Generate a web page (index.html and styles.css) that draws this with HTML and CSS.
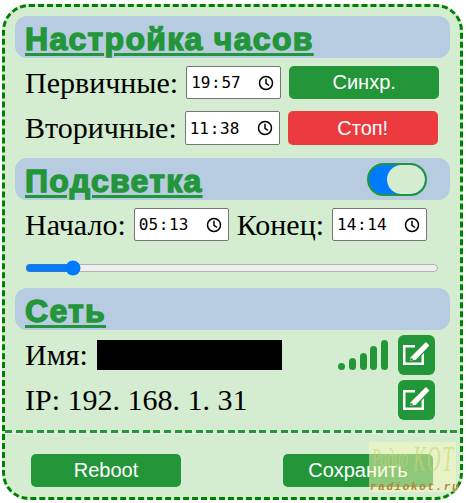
FILE: index.html
```html
<!DOCTYPE html>
<html lang="ru">
<head>
<meta charset="utf-8">
<title>Настройка часов</title>
<link rel="stylesheet" href="styles.css">
</head>
<body>
<svg class="defs" width="0" height="0">
  <defs>
    <g id="clock">
      <circle cx="8" cy="8" r="6.500"/>
      <path d="M8 3.800V8.300L11 10.500"/>
    </g>
    <g id="pen">
      <path class="edit-box" d="M14 6.250H3.250V23.750H21.750V13"/>
      <path class="edit-pen" d="M9 17L24 2Q25 1 26 2L28.300 4.500Q29.300 5.500 28.300 6.500L15.500 20L8.300 21.800Z"/>
      <circle class="edit-tip" cx="10.500" cy="19.500" r="1.300"/>
    </g>
  </defs>
</svg>
<main class="card">
  <div class="content">
    <section class="head"><h2>Настройка часов</h2></section>
    <div class="row">
      <label>Первичные:</label>
      <div class="time"><span>19</span><i>:</i><span>57</span><svg class="clock" width="16" height="16" viewBox="0 0 16 16"><use href="#clock"/></svg></div>
      <button class="btn">Синхр.</button>
    </div>
    <div class="row row-second">
      <label>Вторичные:</label>
      <div class="time"><span>11</span><i>:</i><span>38</span><svg class="clock" width="16" height="16" viewBox="0 0 16 16"><use href="#clock"/></svg></div>
      <button class="btn btn-red">Стоп!</button>
    </div>
    <section class="head head-light">
      <h2>Подсветка</h2>
      <div class="toggle"><span class="knob"></span></div>
    </section>
    <div class="row">
      <label>Начало:</label>
      <div class="time"><span>05</span><i>:</i><span>13</span><svg class="clock" width="16" height="16" viewBox="0 0 16 16"><use href="#clock"/></svg></div>
      <label>Конец:</label>
      <div class="time"><span>14</span><i>:</i><span>14</span><svg class="clock" width="16" height="16" viewBox="0 0 16 16"><use href="#clock"/></svg></div>
    </div>
    <input class="range" type="range" min="0" max="100" value="10">
    <section class="head"><h2>Сеть</h2></section>
    <div class="net-row">
      <span class="net-text">Имя:</span>
      <span class="redact"></span>
      <svg class="signal" width="50" height="30" viewBox="0 0 50 30">
        <rect x="0" y="23" width="7" height="7" rx="3.5"/>
        <rect x="11" y="18" width="7" height="12" rx="3.5"/>
        <rect x="22" y="13" width="7" height="17" rx="3.5"/>
        <rect x="32" y="6" width="7" height="24" rx="3.5"/>
        <rect x="43" y="0" width="7" height="30" rx="3.5"/>
      </svg>
      <span class="edit"><svg width="31" height="30" viewBox="0 0 31 30"><use href="#pen"/></svg></span>
    </div>
    <div class="net-row net-row-ip">
      <span class="net-text">IP: 192. 168. 1. 31</span>
      <span class="edit"><svg width="31" height="30" viewBox="0 0 31 30"><use href="#pen"/></svg></span>
    </div>
  </div>
  <div class="rule"></div>
  <footer class="foot">
    <button class="btn">Reboot</button>
    <button class="btn">Сохранить</button>
  </footer>
</main>
<div class="mark">
  <span class="mark-top"><span>Радио</span><span class="mark-kot">КОТ</span></span>
  <span class="mark-bot">radiokot.ru</span>
</div>
</body>
</html>
```
FILE: styles.css
```css
* { box-sizing: border-box; }
html, body { margin: 0; padding: 0; background: #fff; }
body { height: 503px; overflow: hidden; font-family: "Liberation Serif", serif; color: #000; }
.defs { position: absolute; }

.card {
  width: 461px;
  height: 496px;
  margin: 4px 0 0 2px;
  background: #d4edd1;
  border: 3px dashed #008000;
  border-radius: 27px;
  overflow: hidden;
}
.content { padding: 9px 10px 0 10px; }

.head {
  height: 42px;
  background: #b7cce0;
  border-radius: 12px;
  padding: 0 23px 0 10px;
  display: flex;
  align-items: center;
  justify-content: space-between;
}
h2 {
  margin: 3px 0 0;
  font: bold 32px/42px "Liberation Sans", sans-serif;
  color: #239639;
  text-decoration: underline;
  text-decoration-thickness: 3px;
  text-underline-offset: 3px;
  -webkit-text-stroke: 1.4px #239639;
  letter-spacing: 1.3px;
}

.row {
  display: flex;
  align-items: center;
  gap: 8px;
  height: 33px;
  margin: 8px 0 0 10px;
  font-size: 30px;
}
.row-second { margin-top: 12px; margin-bottom: 13px; height: 34px; }
label { white-space: nowrap; }

.time {
  flex: none;
  width: 95px;
  height: 33px;
  padding: 0 6px 0 4px;
  background: #fff;
  border: 1px solid #767676;
  border-radius: 2px;
  display: flex;
  align-items: center;
  font: 16px "DejaVu Sans Mono", monospace;
  color: #000;
}
.time i { font-style: normal; width: 11px; text-align: center; }
.clock { margin-left: auto; fill: none; stroke: #000; stroke-width: 1.5; }
.row-second .time { height: 34px; }

.btn {
  flex: none;
  width: 150px;
  height: 33px;
  border: 0;
  border-radius: 5px;
  background: #239639;
  color: #fff;
  font: 20px "Liberation Sans", sans-serif;
  padding: 0;
}
.row-second .btn { height: 34px; }
.btn-red { background: #eb3b3f; }

.toggle {
  width: 60px;
  height: 33px;
  border: 2px solid #239639;
  border-radius: 17px;
  background: #007bff;
  display: flex;
  justify-content: flex-end;
  overflow: hidden;
}
.knob { width: 38px; height: 29px; border-radius: 15px; background: #d4edd1; }

.range {
  display: block;
  width: 414px;
  height: 16px;
  margin: 19px 0 12px 10px;
  accent-color: #007bff;
}

.net-row {
  display: flex;
  align-items: center;
  height: 40px;
  margin: 5px 0 0 10px;
  padding-right: 15px;
  font-size: 30px;
}
.net-row-ip { justify-content: space-between; }
.net-text { white-space: nowrap; }
.redact { width: 185px; height: 30px; background: #000; margin-left: 9px; }
.signal { margin-left: auto; margin-right: 10px; fill: #239639; }
.edit {
  width: 37px;
  height: 40px;
  background: #239639;
  border-radius: 6px;
  display: flex;
  align-items: center;
  justify-content: center;
}
.edit-box { fill: none; stroke: #fff; stroke-width: 2.5; }
.edit-pen { fill: #fff; stroke: #239639; stroke-width: 1.2; }
.edit-tip { fill: #239639; }

.rule {
  height: 4px;
  margin-top: 10px;
  background:
    repeating-linear-gradient(90deg, #239639 0 7px, transparent 7px 10.6px) top / 100% 3px no-repeat,
    linear-gradient(#e9ece9, #e9ece9) bottom / 100% 1px no-repeat;
}
.foot {
  display: flex;
  justify-content: space-between;
  padding: 20px 27px 0 26px;
}

.mark {
  position: absolute;
  left: 369px;
  top: 442px;
  width: 87px;
  height: 50px;
  background: rgba(250, 250, 190, 0.5);
}
.mark-top {
  position: absolute;
  left: 3px;
  top: 0;
  width: 83px;
  display: flex;
  justify-content: space-between;
  font: italic 14px/18px "Liberation Serif", serif;
  color: rgba(205, 210, 110, 0.6);
  white-space: nowrap;
  transform: scaleY(1.9);
  transform-origin: top left;
}
.mark-kot { font-size: 19px; letter-spacing: 2px; }
.mark-bot {
  position: absolute;
  left: 1px;
  top: 38px;
  font: italic bold 11px/14px "Liberation Mono", monospace;
  letter-spacing: 1.6px;
  color: #b5843a;
  white-space: nowrap;
}
```
